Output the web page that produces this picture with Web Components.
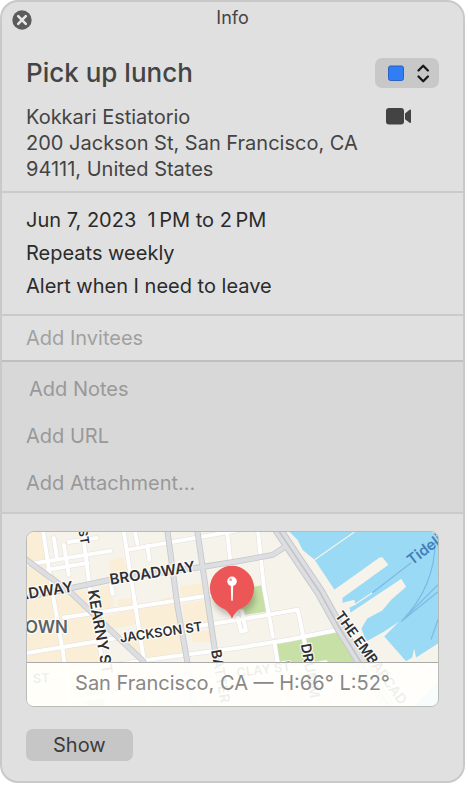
<!DOCTYPE html>
<html lang="en">
<head>
<meta charset="utf-8">
<meta name="viewport" content="width=device-width, initial-scale=1">
<title>Info</title>
<style>
  body {
    margin: 0;
    padding: 0 3px 5px 0;
    background: #fff;
    color: #444;
    font-family: Inter, "Liberation Sans", sans-serif;
    font-size: 20px;
  }
</style>
</head>
<body>
<info-window heading="Info">
  <event-header>
    <span slot="title">Pick up lunch</span>
    <span slot="place">Kokkari Estiatorio<br>200 Jackson St, San Francisco, CA 94111, United States</span>
  </event-header>
  <detail-group>
    <detail-line>Jun 7, 2023&nbsp; 1&#8201;PM to 2&#8201;PM</detail-line>
    <detail-line>Repeats weekly</detail-line>
    <detail-line>Alert when I need to leave</detail-line>
  </detail-group>
  <detail-group class="single">
    <add-field>Add Invitees</add-field>
  </detail-group>
  <detail-group class="shaded">
    <add-field indent>Add Notes</add-field>
    <add-field>Add URL</add-field>
    <add-field>Add Attachment...</add-field>
  </detail-group>
  <event-map>San Francisco, CA — H:66° L:52°</event-map>
  <push-button>Show</push-button>
</info-window>

<script>
class BaseElement extends HTMLElement {
  constructor() {
    super();
    const template = document.createElement("template");
    template.innerHTML = this.markup();
    this.attachShadow({ mode: "open" }).appendChild(template.content.cloneNode(true));
  }
}

class InfoWindow extends BaseElement {
  markup() {
    return `
      <style>
        :host {
          display: block;
          box-sizing: border-box;
          border: 2px solid #c9c9c9;
          border-radius: 18px;
          background: #e0e0e0;
          overflow: hidden;
          padding-bottom: 20px;
        }
        header {
          display: grid;
          grid-template-columns: 20px 1fr 20px;
          align-items: center;
          height: 32px;
          padding: 0 10px;
        }
        h1 {
          margin: 0;
          font-size: 18px;
          font-weight: 400;
          line-height: 24px;
          text-align: center;
        }
        button {
          width: 20px;
          height: 20px;
          padding: 0;
          border: 0;
          background: none;
          margin-top: 4px;
        }
        svg { display: block; }
      </style>
      <header>
        <button type="button" aria-label="Close">
          <svg width="20" height="20" viewBox="0 0 20 20">
            <circle cx="10" cy="10" r="9.7" fill="#5b5b5b"/>
            <path d="M6.2 6.2l7.6 7.6M13.8 6.2l-7.6 7.6" stroke="#e6e6e6" stroke-width="2.6" stroke-linecap="round"/>
          </svg>
        </button>
        <h1></h1>
      </header>
      <slot></slot>`;
  }
  connectedCallback() {
    this.shadowRoot.querySelector("h1").textContent = this.getAttribute("heading");
  }
}

class EventHeader extends BaseElement {
  markup() {
    return `
      <style>
        :host {
          display: grid;
          grid-template-columns: 1fr 64px;
          row-gap: 16px;
          padding: 24px 24px 9px;
        }
        h2 {
          margin: 0;
          font-size: 26px;
          font-weight: 500;
          line-height: 30px;
        }
        p {
          margin: 0;
          line-height: 26px;
        }
        .calendar {
          display: grid;
          height: 30px;
        }
        .calendar > * { grid-area: 1 / 1; }
        select {
          appearance: none;
          width: 100%;
          border: 0;
          border-radius: 7px;
          background: #c8c8c8;
        }
        svg { display: block; pointer-events: none; }
        button {
          justify-self: start;
          align-self: start;
          margin: 3px 0 0 10px;
          padding: 0;
          border: 0;
          background: none;
        }
      </style>
      <h2><slot name="title"></slot></h2>
      <div class="calendar">
        <select aria-label="Calendar"><option value="blue" aria-label="Blue"></option></select>
        <svg width="64" height="30" viewBox="0 0 64 30">
          <rect x="13.5" y="8" width="15" height="14.5" rx="2" fill="#307df6" stroke="#2b62bd"/>
          <path d="M43.5 12.5l4.7-4.7 4.7 4.7M43.5 18.5l4.7 4.7 4.7-4.7" fill="none" stroke="#181818" stroke-width="2.3" stroke-linecap="round" stroke-linejoin="round"/>
        </svg>
      </div>
      <p><slot name="place"></slot></p>
      <button type="button" aria-label="Video call">
        <svg width="27" height="18" viewBox="0 0 27 18">
          <rect x="1" y="1" width="18" height="16.5" rx="3" fill="#434343"/>
          <path d="M20 6.4L24.6 2.7Q26 2 26 3.6V14.9Q26 16.4 24.6 15.7L20 12.2Z" fill="#434343"/>
        </svg>
      </button>`;
  }
}

class DetailGroup extends BaseElement {
  markup() {
    return `
      <style>
        :host {
          display: flex;
          flex-direction: column;
          padding: 11px 24px;
          border-top: 2px solid #cacaca;
        }
        :host(.single) { padding: 0 24px; }
        :host(.shaded) {
          padding: 3px 24px 6px;
          border-top-color: #bfbfbf;
          border-bottom: 2px solid #cacaca;
          background: #d8d8d8;
          --field-height: 47px;
          --field-color: #999;
        }
      </style>
      <slot></slot>`;
  }
}

class DetailLine extends BaseElement {
  markup() {
    return `
      <style>
        :host {
          display: block;
          color: #2b2b2b;
          line-height: 33px;
        }
      </style>
      <slot></slot>`;
  }
}

class AddField extends BaseElement {
  markup() {
    return `
      <style>
        :host { display: flex; }
        :host([indent]) { padding-left: 3px; }
        button {
          height: var(--field-height, 44px);
          padding: 0;
          border: 0;
          background: none;
          color: var(--field-color, #a1a1a1);
          font: inherit;
        }
      </style>
      <button type="button"><slot></slot></button>`;
  }
}

class EventMap extends BaseElement {
  markup() {
    return `
      <style>
        :host {
          display: block;
          position: relative;
          margin: 17px 24px 0;
          border: 1px solid #b9bbb9;
          border-radius: 8px;
          overflow: hidden;
        }
        svg { display: block; width: 100%; height: auto; }
        text { font-weight: 600; }
        .caption {
          position: absolute;
          inset: auto 0 0 0;
          height: 43px;
          border-top: 1px solid #aaa;
          background: rgba(255, 255, 252, .92);
          color: #888;
          line-height: 41px;
          text-align: center;
          white-space: nowrap;
        }
      </style>
      <svg viewBox="0 0 413 175" role="img" aria-label="Map of the event location">
        <defs>
          <filter id="soft" x="-30%" y="-30%" width="160%" height="160%"><feGaussianBlur stdDeviation="3"/></filter>
        </defs>
        <rect width="413" height="175" fill="#f6f3eb"/>
        <!-- shopping blocks -->
        <g fill="#fbeed6">
          <path d="M0 0H15L21 36 43 60 62 58 74 125 0 130Z"/>
          <path d="M63 58L84 53 88 78 70 82Z"/>
          <path d="M82 29L96 25 104 45 85 48Z"/>
          <path d="M91 68L107 66 112 92 76 100 70 86 92 82Z"/>
          <path d="M92 103L156 94 161 125 118 130Z"/>
          <path d="M112 78L134 73 136 66 150 65 155 92 114 98Z"/>
          <path d="M156 72L180 68 184 91 158 94Z"/>
          <path d="M154 55L178 51 180 64 155 68Z"/>
          <path d="M0 128L75 116 82 175 0 175Z"/>
          <path d="M165 101L185 98 188 111 166 110Z"/>
        </g>
        <!-- parks -->
        <g fill="#c7e0a6">
          <path d="M218 57L238 53 241 80 214 84Z"/>
          <path d="M250 113L313 100 333 133 254 134Z"/>
          <path d="M335 124Q346 125 351 140L344 140Z"/>
          <rect x="60" y="158" width="17" height="17"/>
        </g>
        <!-- bay and piers -->
        <path d="M264 0L272 8 277 18 289 28 309 58 357 25 363 33 317 66 317 71 329 68 330 73 324 76 325 81 376 47 381 55 366 68 357 79 342 87 336 97 341 110 359 100 374 90 359 105 381 130 387 126 389 117 391 126 413 112V0Z" fill="#9adaf4"/>
        <path d="M390 175L413 150V175Z" fill="#9adaf4"/>
        <path d="M309 58L355 25 363 33 317 66 309 71Z" fill="#f6f3eb"/>
        <path d="M325 81L347 62 376 47 325 81Z" fill="#9adaf4"/>
        <path d="M289 28L329 0M329 73L347 61" stroke="#f6f3eb" stroke-width="1.2"/>
        <path d="M347 61L386 31M410 10Q410 55 376 90L413 53M376 90L413 60M413 88L406 108" fill="none" stroke="#7cb9e4" stroke-width="1.2"/>
        <g fill="none" stroke-linecap="round" stroke-linejoin="round">
          <!-- side streets -->
          <g stroke="#e2e0de" stroke-width="5">
            <path d="M16 -2L26 63 36 120 44 178M56 0L63 56 74 120 83 178M97 -2L109 75 117 126 124 178M201 -2L205 36M232 -2L238 55 247 105M249 113L259 178"/>
            <path d="M-2 33L84 19M21 38L61 31M27 6L30 26M37 13L42 43M42 10L70 6M101 18L214 -2M121 14L123 28M108 -2L111 12M84 50L86 62"/>
            <path d="M37 86L111 75 200 61M-2 122L94 106 176 94 214 88 272 78 283 130 291 178M117 129L214 116 264 108 314 98M-2 148L117 129M212 86L215 100 220 99 216 80"/>
            <path d="M40 170L210 146 300 131"/>
          </g>
          <g stroke="#fff" stroke-width="4">
            <path d="M16 -2L26 63 36 120 44 178M56 0L63 56 74 120 83 178M97 -2L109 75 117 126 124 178M201 -2L205 36M232 -2L238 55 247 105M249 113L259 178"/>
            <path d="M-2 33L84 19M21 38L61 31M27 6L30 26M37 13L42 43M42 10L70 6M101 18L214 -2M121 14L123 28M108 -2L111 12M84 50L86 62"/>
            <path d="M37 86L111 75 200 61M-2 122L94 106 176 94 214 88 272 78 283 130 291 178M117 129L214 116 264 108 314 98M-2 148L117 129M212 86L215 100 220 99 216 80"/>
            <path d="M40 170L210 146 300 131"/>
          </g>
          <!-- main roads -->
          <g stroke="#c5c7cb" stroke-width="6">
            <path d="M-2 27L44 61 117 130M-2 66L46 56 84 48 177 35 214 29 247 23 259 15M141 -2L151 73 161 130 168 178M171 -2L181 66 189 120 198 178"/>
            <path d="M251 -4L294 60 314 96 337 133 365 178" stroke-width="11"/>
          </g>
          <g stroke="#dcdee2" stroke-width="4.4">
            <path d="M-2 27L44 61 117 130M-2 66L46 56 84 48 177 35 214 29 247 23 259 15M141 -2L151 73 161 130 168 178M171 -2L181 66 189 120 198 178"/>
            <path d="M251 -4L294 60 314 96 337 133 365 178" stroke-width="9"/>
          </g>
          <path d="M251 -4L294 60 314 96 337 133 365 178" stroke="#c2c4c7" stroke-width="1.6"/>
        </g>
        <!-- street names -->
        <g fill="#303030" stroke="#fff" stroke-opacity=".8" stroke-width="2.5" paint-order="stroke" stroke-linejoin="round" font-size="15">
          <text transform="translate(84 53) rotate(-9)">BROADWAY</text>
          <text transform="translate(47 60) rotate(-9)" text-anchor="end">ADWAY</text>
          <text transform="translate(61 59) rotate(80)">KEARNY ST</text>
          <text transform="translate(94 111) rotate(-8)" font-size="13">JACKSON ST</text>
          <text transform="translate(185 119) rotate(80)" font-size="14">BATTER</text>
          <text transform="translate(54 13) rotate(82)" text-anchor="end" font-size="12">ST</text>
          <text transform="translate(275 113) rotate(80)" font-size="14">DRUMM</text>
          <text transform="translate(309 84) rotate(54)" font-size="14">THE EMBARCAD</text>
          <text transform="translate(211 146) rotate(-7)" font-size="13">CLAY ST</text>
          <text transform="translate(23 151) rotate(-3)" text-anchor="end" font-size="13">ST</text>
          <text x="41" y="102" text-anchor="end" font-size="17" fill="#596469">OWN</text>
        </g>
        <text transform="translate(387 34) rotate(-38)" font-size="15" fill="#427fb8">Tideli</text>
        <!-- pin -->
        <ellipse cx="208" cy="66" rx="21" ry="18" fill="#000" opacity=".25" filter="url(#soft)"/>
        <path d="M206 34A22.5 22.5 0 0 1 215 77Q210 79 206 87Q202 79 197 77A22.5 22.5 0 0 1 206 34Z" fill="#ed5656"/>
        <path d="M204.8 53H207.2L206.8 68.5Q206 70 205.2 68.5Z" fill="#fff"/>
        <circle cx="206" cy="49.5" r="4.8" fill="#fff"/>
        <circle cx="204.6" cy="48" r="1.4" fill="#f39a9a"/>
      </svg>
      <div class="caption"><slot></slot></div>`;
  }
}

class PushButton extends BaseElement {
  markup() {
    return `
      <style>
        :host { display: flex; padding: 22px 24px 0; }
        button {
          height: 32px;
          padding: 0 27px;
          border: 0;
          border-radius: 7px;
          background: #c6c6c6;
          color: #3c3c3c;
          font: inherit;
        }
      </style>
      <button type="button"><slot></slot></button>`;
  }
}

customElements.define("info-window", InfoWindow);
customElements.define("event-header", EventHeader);
customElements.define("detail-group", DetailGroup);
customElements.define("detail-line", DetailLine);
customElements.define("add-field", AddField);
customElements.define("event-map", EventMap);
customElements.define("push-button", PushButton);
</script>
</body>
</html>
